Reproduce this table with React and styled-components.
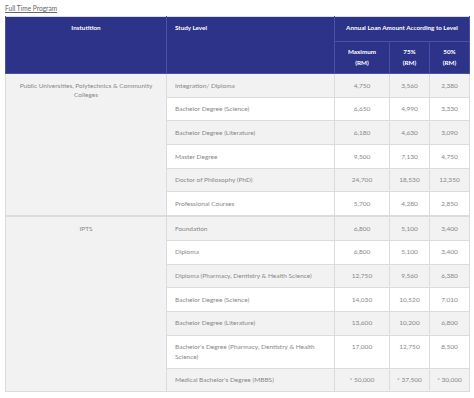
import React from 'react'
import styled, { createGlobalStyle } from 'styled-components'

const Global = createGlobalStyle`
  body {
    margin: 0;
    background: #fff;
    font-family: Lato, "Open Sans", sans-serif;
  }
`

const Page = styled.div`
  padding: 4px 5px 0 5px;
`

const Caption = styled.span`
  display: block;
  font-size: 6.6px;
  line-height: 9px;
  color: #666;
  text-decoration: underline;
  margin-bottom: 3px;
  width: max-content;
`

const Table = styled.table`
  width: 464px;
  border-collapse: collapse;
  table-layout: fixed;
  font-size: 6.5px;
  color: #888;
  border: 1px solid #dcdcdc;
`

const Th = styled.th`
  background: #2c3389;
  color: #fff;
  font-weight: 700;
  font-size: 6.3px;
  line-height: 11px;
  vertical-align: top;
  padding: ${p => (p.$sub ? '4px 4px 5.5px' : '5px 8px 7.5px')};
  text-align: ${p => p.$align || 'center'};
  border: 1px solid #4a51a0;
  border-top: none;
`

const Row = styled.tr`
  background: ${p => (p.$striped ? '#f2f2f2' : '#fff')};
  border-top: ${p => (p.$group ? '2px solid #dcdcdc' : '1px solid #dcdcdc')};
`

const Td = styled.td`
  padding: ${p => (p.$num ? '6.6px 2px 6.6px' : '6.6px 8px 6.6px')};
  line-height: 9.5px;
  vertical-align: top;
  white-space: ${p => (p.$num ? 'nowrap' : 'normal')};
  text-align: ${p => p.$align || 'left'};
  border: 1px solid #dcdcdc;
  background: ${p => (p.$group ? '#f2f2f2' : 'inherit')};
`

const groups = [
  {
    name: 'Public Universities, Polytechnics & Community Colleges',
    rows: [
      ['Integration/ Diploma', '4,750', '3,560', '2,380'],
      ['Bachelor Degree (Science)', '6,650', '4,990', '3,330'],
      ['Bachelor Degree (Literature)', '6,180', '4,630', '3,090'],
      ['Master Degree', '9,500', '7,130', '4,750'],
      ['Doctor of Philosophy (PhD)', '24,700', '18,530', '12,350'],
      ['Professional Courses', '5,700', '4,280', '2,850'],
    ],
  },
  {
    name: 'IPTS',
    rows: [
      ['Foundation', '6,800', '5,100', '3,400'],
      ['Diploma', '6,800', '5,100', '3,400'],
      ['Diploma (Pharmacy, Dentistry & Health Science)', '12,750', '9,560', '6,380'],
      ['Bachelor Degree (Science)', '14,030', '10,520', '7,010'],
      ['Bachelor Degree (Literature)', '13,600', '10,200', '6,800'],
      ["Bachelor's Degree (Pharmacy, Dentistry & Health Science)", '17,000', '12,750', '8,500'],
      ["Medical Bachelor's Degree (MBBS)", '* 50,000', '* 37,500', '* 30,000'],
    ],
  },
]

export default function App() {
  let idx = 0
  return (
    <Page>
      <Global />
      <Caption>Full Time Program</Caption>
      <Table>
        <colgroup>
          <col style={{ width: 161 }} />
          <col style={{ width: 168 }} />
          <col style={{ width: 55 }} />
          <col style={{ width: 40 }} />
          <col style={{ width: 40 }} />
        </colgroup>
        <thead>
          <tr>
            <Th rowSpan={2}>Instutition</Th>
            <Th rowSpan={2} $align="left">Study Level</Th>
            <Th colSpan={3}>Annual Loan Amount According to Level</Th>
          </tr>
          <tr>
            <Th $sub>Maximum<br />(RM)</Th>
            <Th $sub>75%<br />(RM)</Th>
            <Th $sub>50%<br />(RM)</Th>
          </tr>
        </thead>
        <tbody>
          {groups.map((g, gi) =>
            g.rows.map((r, ri) => {
              const striped = idx++ % 2 === 0
              return (
                <Row key={gi + '-' + ri} $striped={striped} $group={gi > 0 && ri === 0}>
                  {ri === 0 && (
                    <Td rowSpan={g.rows.length} $align="center" $group>{g.name}</Td>
                  )}
                  <Td>{r[0]}</Td>
                  <Td $num $align="center">{r[1]}</Td>
                  <Td $num $align="center">{r[2]}</Td>
                  <Td $num $align="center">{r[3]}</Td>
                </Row>
              )
            })
          )}
        </tbody>
      </Table>
    </Page>
  )
}
